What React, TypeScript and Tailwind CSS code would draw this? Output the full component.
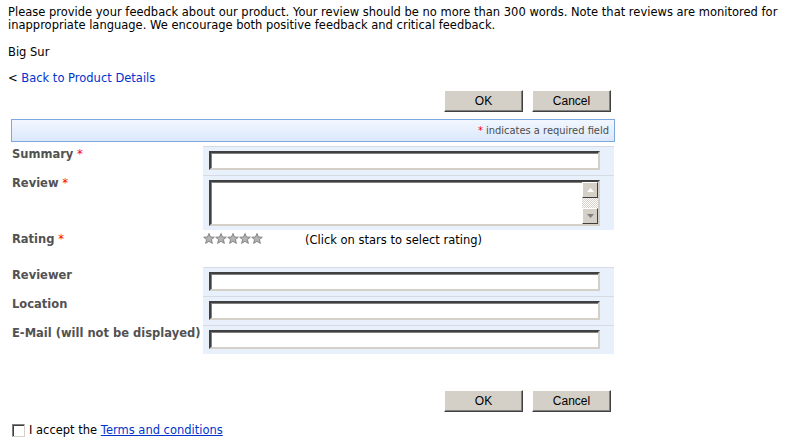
import React from 'react';

const Star = () => (
  <svg width="12" height="11" viewBox="0 0 12 11">
    <path
      d="M6 0.5 L7.5 4 L11.3 4.2 L8.4 6.6 L9.4 10.4 L6 8.3 L2.6 10.4 L3.6 6.6 L0.7 4.2 L4.5 4 Z"
      fill="#b4b4b4"
      stroke="#7c7c7c"
      strokeWidth="0.9"
    />
  </svg>
);

const Button = ({ label }: { label: string }) => (
  <button
    type="button"
    className="w-[79px] h-[22px] bg-[#d4d0c8] text-black border border-t-white border-l-white border-r-[#404040] border-b-[#404040] shadow-[inset_-1px_-1px_0_#808080] font-['Liberation_Sans'] text-[12px] leading-none"
  >
    {label}
  </button>
);

const TextBox = () => (
  <input
    type="text"
    className="w-[391px] h-[19px] bg-white border-2 border-t-[#404040] border-l-[#404040] border-r-[#d4d0c8] border-b-[#d4d0c8] shadow-[inset_1px_1px_0_#808080] outline-none"
  />
);

const Label = ({ text, required }: { text: string; required?: boolean }) => (
  <div className="font-bold text-[#525252] whitespace-nowrap">
    {text}
    {required && <span className="text-[#ff0000] font-normal"> *</span>}
  </div>
);

const Row = ({
  label,
  required,
  children,
  height,
}: {
  label: string;
  required?: boolean;
  children: React.ReactNode;
  height: string;
}) => (
  <div className={`flex ${height}`}>
    <div className="w-[192px] pl-[1px] pt-[2px]">
      <Label text={label} required={required} />
    </div>
    <div className="w-[411px] bg-[#e8f0fc] pl-[6px] pt-[4px] border-t border-[#d6dae2]">
      {children}
    </div>
  </div>
);

export default function App() {
  return (
    <div className="w-[788px] h-[444px] bg-white font-['DejaVu_Sans',Verdana,sans-serif] text-[11.5px] leading-[13px] text-black pt-[6px] px-[8px]">
      <p>
        Please provide your feedback about our product. Your review should be no more than 300
        words. Note that reviews are monitored for inappropriate language. We encourage both
        positive feedback and critical feedback.
      </p>
      <p className="mt-[14px]">Big Sur</p>
      <p className="mt-[13px]">
        &lt; <a className="text-[#0033cc]">Back to Product Details</a>
      </p>

      <div className="flex justify-end gap-[9px] w-[603px] mt-[5px]">
        <Button label="OK" />
        <Button label="Cancel" />
      </div>

      <div className="ml-[3px] mt-[7px] w-[604px] h-[23px] border border-[#7ea6e0] bg-gradient-to-b from-[#f2f7fe] to-[#dbe8fb] flex items-center justify-end pr-[5px] font-['DejaVu_Sans_Condensed'] text-[11px] text-[#4c4c4c]">
        <span className="text-[#ff0000]">*</span>&nbsp;indicates a required field
      </div>

      <div className="ml-[3px] mt-[4px]">
        <Row label="Summary" required height="h-[29px]">
          <TextBox />
        </Row>
        <Row label="Review" required height="h-[55px]">
          <div className="relative w-[391px] h-[46px] bg-white border-2 border-t-[#404040] border-l-[#404040] border-r-[#d4d0c8] border-b-[#d4d0c8] shadow-[inset_1px_1px_0_#808080]">
            <div className="absolute right-0 top-0 bottom-0 w-[16px] bg-[repeating-conic-gradient(#d4d0c8_0_25%,#ffffff_0_50%)] bg-[length:2px_2px] flex flex-col justify-between">
              <div className="h-[16px] bg-[#d4d0c8] border border-t-white border-l-white border-r-[#404040] border-b-[#404040] flex items-center justify-center">
                <svg width="7" height="4" viewBox="0 0 7 4">
                  <path d="M3.5 0 L7 4 L0 4 Z" fill="#ffffff" />
                </svg>
              </div>
              <div className="h-[16px] bg-[#d4d0c8] border border-t-white border-l-white border-r-[#404040] border-b-[#404040] flex items-center justify-center">
                <svg width="7" height="4" viewBox="0 0 7 4">
                  <path d="M0 0 L7 0 L3.5 4 Z" fill="#808080" />
                </svg>
              </div>
            </div>
          </div>
        </Row>
        <div className="flex h-[37px]">
          <div className="w-[192px] pl-[1px] pt-[3px]">
            <Label text="Rating" required />
          </div>
          <div className="flex items-start pt-[3px]">
            <div className="flex">
              <Star />
              <Star />
              <Star />
              <Star />
              <Star />
            </div>
            <span className="ml-[42px] leading-[14px]">(Click on stars to select rating)</span>
          </div>
        </div>
        <Row label="Reviewer" height="h-[29px]">
          <TextBox />
        </Row>
        <Row label="Location" height="h-[29px]">
          <TextBox />
        </Row>
        <Row label="E-Mail (will not be displayed)" height="h-[29px]">
          <TextBox />
        </Row>
      </div>

      <div className="flex justify-end gap-[9px] w-[603px] mt-[36px]">
        <Button label="OK" />
        <Button label="Cancel" />
      </div>

      <label className="flex items-center mt-[12px] ml-[4px] gap-[4px]">
        <span className="w-[13px] h-[13px] bg-white border border-t-[#808080] border-l-[#808080] border-r-[#d4d0c8] border-b-[#d4d0c8] shadow-[inset_1px_1px_0_#404040]" />
        <span>
          I accept the <a className="text-[#0033cc] underline">Terms and conditions</a>
        </span>
      </label>
    </div>
  );
}
